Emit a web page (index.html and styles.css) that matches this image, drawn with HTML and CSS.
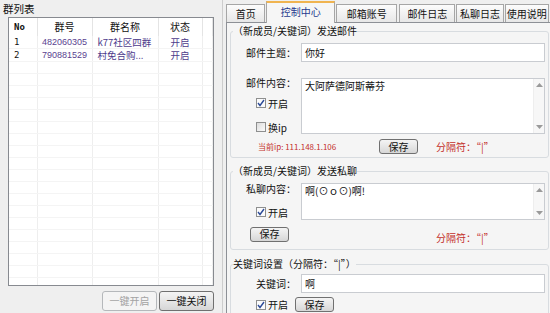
FILE: index.html
```html
<!DOCTYPE html>
<html lang="zh-CN">
<head>
    <meta charset="UTF-8">
    <title>群助手</title>
    <link rel="stylesheet" href="styles.css">
</head>
<body>
    <div class="app">
        <div class="side">
            <div class="side-title">群列表</div>
            <div class="list">
                <table>
                    <colgroup>
                        <col style="width:28px"><col style="width:55px"><col style="width:66px"><col style="width:44px"><col>
                    </colgroup>
                    <tr class="head"><th class="c-no">No</th><th>群号</th><th>群名称</th><th>状态</th><th></th></tr>
                    <tr><td class="c-no">1</td><td class="c-id">482060305</td><td class="c-name">k77社区四群</td><td class="c-st">开启</td><td></td></tr>
                    <tr><td class="c-no">2</td><td class="c-id">790881529</td><td class="c-name">村免合购...</td><td class="c-st">开启</td><td></td></tr>
                    <tr><td></td><td></td><td></td><td></td><td></td></tr>
                    <tr><td></td><td></td><td></td><td></td><td></td></tr>
                    <tr><td></td><td></td><td></td><td></td><td></td></tr>
                    <tr><td></td><td></td><td></td><td></td><td></td></tr>
                    <tr><td></td><td></td><td></td><td></td><td></td></tr>
                    <tr><td></td><td></td><td></td><td></td><td></td></tr>
                    <tr><td></td><td></td><td></td><td></td><td></td></tr>
                    <tr><td></td><td></td><td></td><td></td><td></td></tr>
                    <tr><td></td><td></td><td></td><td></td><td></td></tr>
                    <tr><td></td><td></td><td></td><td></td><td></td></tr>
                    <tr><td></td><td></td><td></td><td></td><td></td></tr>
                    <tr><td></td><td></td><td></td><td></td><td></td></tr>
                    <tr><td></td><td></td><td></td><td></td><td></td></tr>
                    <tr><td></td><td></td><td></td><td></td><td></td></tr>
                    <tr><td></td><td></td><td></td><td></td><td></td></tr>
                    <tr><td></td><td></td><td></td><td></td><td></td></tr>
                    <tr><td></td><td></td><td></td><td></td><td></td></tr>
                    <tr><td></td><td></td><td></td><td></td><td></td></tr>
                    <tr><td></td><td></td><td></td><td></td><td></td></tr>
                </table>
            </div>
            <div class="side-btns">
                <button class="btn btn-big" disabled>一键开启</button>
                <button class="btn btn-big">一键关闭</button>
            </div>
        </div>

        <div class="main">
            <div class="tabs">
                <div class="tab t1">首页</div>
                <div class="tab t2 active">控制中心</div>
                <div class="tab t3">邮箱账号</div>
                <div class="tab t4">邮件日志</div>
                <div class="tab t5">私聊日志</div>
                <div class="tab t6">使用说明</div>
            </div>
            <div class="panel">
                <fieldset class="group g-mail">
                    <legend>（新成员/关键词）发送邮件</legend>
                    <div class="row r-subject">
                        <div class="lbl">邮件主题：</div>
                        <div class="input">你好</div>
                    </div>
                    <div class="row r-content">
                        <div class="stack">
                            <div class="lbl">邮件内容：</div>
                            <label class="check c1"><span class="chk on"></span>开启</label>
                            <label class="check c2"><span class="chk"></span>换ip</label>
                        </div>
                        <div class="area a-mail">
                            <div class="area-text">大阿萨德阿斯蒂芬</div>
                            <div class="vscroll">
                                <svg width="7" height="4" viewBox="0 0 7 4"><path d="M0 4 L3.5 0 L7 4 Z" fill="#9a9a9a"/></svg>
                                <svg width="7" height="4" viewBox="0 0 7 4"><path d="M0 0 L3.5 4 L7 0 Z" fill="#9a9a9a"/></svg>
                            </div>
                        </div>
                    </div>
                    <div class="foot f-mail">
                        <span class="ip">当前ip: 111.148.1.106</span>
                        <button class="btn">保存</button>
                        <span class="sep">分隔符：“|”</span>
                    </div>
                </fieldset>

                <fieldset class="group g-chat">
                    <legend>（新成员/关键词）发送私聊</legend>
                    <div class="row r-chat">
                        <div class="stack">
                            <div class="lbl">私聊内容：</div>
                            <label class="check c3"><span class="chk on"></span>开启</label>
                        </div>
                        <div class="area a-chat">
                            <div class="area-text">啊(⊙ｏ⊙)啊!</div>
                            <div class="vscroll">
                                <svg width="7" height="4" viewBox="0 0 7 4"><path d="M0 4 L3.5 0 L7 4 Z" fill="#9a9a9a"/></svg>
                                <svg width="7" height="4" viewBox="0 0 7 4"><path d="M0 0 L3.5 4 L7 0 Z" fill="#9a9a9a"/></svg>
                            </div>
                        </div>
                    </div>
                    <div class="foot f-chat">
                        <button class="btn">保存</button>
                        <span class="sep">分隔符：“|”</span>
                    </div>
                </fieldset>

                <fieldset class="group g-key">
                    <legend>关键词设置（分隔符：“|”）</legend>
                    <div class="row r-key">
                        <div class="lbl">关键词：</div>
                        <div class="input">啊</div>
                    </div>
                    <div class="foot f-key">
                        <label class="check"><span class="chk on"></span>开启</label>
                        <button class="btn">保存</button>
                    </div>
                </fieldset>
            </div>
        </div>
    </div>
</body>
</html>
```

FILE: styles.css
```css
* {
    box-sizing: border-box;
}

body {
    margin: 0;
    width: 550px;
    height: 313px;
    overflow: hidden;
    background-color: #efefef;
    font-family: "Noto Sans CJK SC", "Liberation Sans", sans-serif;
    font-size: 10px;
    color: #111;
}

.app {
    display: flex;
    height: 313px;
}

/* left: group list */

.side {
    width: 223px;
    padding: 2px 0 0 3px;
    border-right: 1px solid #cdcdcd;
    display: flex;
    flex-direction: column;
}

.side-title {
    height: 14px;
    line-height: 13px;
    font-size: 10.5px;
}

.list {
    margin: 1px 0 0 5px;
    width: 206px;
    height: 269px;
    border: 1px solid #878a90;
    background-color: #fff;
    overflow: hidden;
}

.list table {
    width: 100%;
    border-collapse: collapse;
    table-layout: fixed;
}

.list th,
.list td {
    height: 12px;
    padding: 0;
    line-height: 12px;
    font-size: 9.5px;
    border-right: 1px solid #eeeeee;
    border-bottom: 1px solid #f4f4f4;
    white-space: nowrap;
}

.list th {
    height: 18px;
    font-weight: normal;
    font-size: 10px;
    text-align: center;
    border-right-color: #e4e4e4;
    border-bottom: none;
}

.list .c-no {
    text-align: left;
    padding-left: 5px;
    font-family: "DejaVu Sans Mono", monospace;
    font-size: 9px;
}

.list .head .c-no {
    font-weight: bold;
}

.list .c-id {
    text-align: center;
    color: #5a3f90;
    font-family: "Liberation Sans", sans-serif;
    font-size: 9px;
}

.list .c-name {
    padding-left: 5px;
    color: #4d3b8c;
}

.list .c-st {
    text-align: center;
    color: #4d3b8c;
}

.side-btns {
    margin: 5px 0 0 5px;
    width: 206px;
    display: flex;
    justify-content: flex-end;
    gap: 2px;
}

.btn {
    height: 15px;
    padding: 0;
    border: 1px solid #707070;
    border-radius: 3px;
    background: linear-gradient(#f4f4f4, #e6e6e6 50%, #d6d6d6);
    font-family: inherit;
    font-size: 10px;
    line-height: 12px;
    color: #111;
}

.btn-big {
    width: 55px;
    height: 20px;
}

.btn:disabled {
    color: #a3a3a3;
    border-color: #b5b8bb;
    background: #f4f4f4;
}

/* right: tabs */

.main {
    width: 324px;
    margin-left: 3px;
    display: flex;
    flex-direction: column;
}

.tabs {
    height: 22px;
    display: flex;
    align-items: flex-end;
}

.tab {
    height: 18px;
    margin-right: 1px;
    border: 1px solid #a6a6a6;
    border-bottom: none;
    background: linear-gradient(#fcfcfc, #e7e7e7);
    text-align: center;
    line-height: 17px;
    white-space: nowrap;
}

.t1 { width: 40px; }
.t2 { width: 70px; }
.t3 { width: 62px; margin-right: 2px; }
.t4 { width: 57px; }
.t5 { width: 48px; }
.t6 { width: 45px; }

.tab.active {
    height: 22px;
    margin-bottom: -1px;
    border-top: 2px solid #f0b450;
    background: #f6f6f6;
    color: #1f3b8e;
    line-height: 18px;
    position: relative;
    z-index: 1;
}

.panel {
    height: 291px;
    padding: 2px 0 0 3px;
    border-top: 1px solid #8d9096;
    border-left: 1px solid #8d9096;
    background-color: #f5f5f5;
}

.group {
    margin: 0 1px 0 0;
    padding: 0 3px 3px 2px;
    border: 1px solid #d8dce0;
    border-radius: 3px;
}

.group legend {
    padding: 0;
    height: 12px;
    line-height: 12px;
    font-size: 10px;
}

.g-chat {
    margin-top: 7px;
    padding-bottom: 4px;
}

.g-key {
    margin-top: 8px;
}

.row {
    display: flex;
}

.lbl {
    width: 68px;
    padding-right: 5px;
    text-align: right;
    line-height: 12px;
    white-space: nowrap;
}

.r-subject {
    margin-top: 6px;
    align-items: center;
}

.r-key {
    margin-top: 4px;
    align-items: center;
}

.input {
    flex: 1;
    height: 19px;
    padding-left: 3px;
    border: 1px solid #c9ccd1;
    background-color: #fff;
    line-height: 17px;
}

.r-content {
    margin-top: 16px;
}

.r-chat {
    margin-top: 6px;
}

.stack {
    width: 68px;
    display: flex;
    flex-direction: column;
}

.stack .lbl {
    margin-top: -1px;
}

.r-chat .stack .lbl {
    margin-top: 0;
}

.check {
    display: flex;
    align-items: center;
    gap: 2px;
    height: 12px;
    padding-left: 23px;
    white-space: nowrap;
}

.c1 { margin-top: 8px; }
.c2 { margin-top: 12px; font-family: "Noto Sans CJK SC", "DejaVu Sans Mono", monospace; }
.c3 { margin-top: 11px; }

.chk {
    width: 10px;
    height: 10px;
    border: 1px solid #8e8f8f;
    background: linear-gradient(135deg, #dcdcdc, #fbfbfb);
}

.chk.on {
    background: #fbfbfb url("data:image/svg+xml;utf8,<svg xmlns='http://www.w3.org/2000/svg' width='8' height='8' viewBox='0 0 8 8'><path d='M1 4 L3 6.5 L7 1' fill='none' stroke='%232b4a98' stroke-width='1.4'/></svg>") center no-repeat;
}

.area {
    flex: 1;
    display: flex;
    border: 1px solid #c9ccd1;
    background-color: #fff;
}

.a-mail { height: 56px; }
.a-chat { height: 37px; }

.area-text {
    flex: 1;
    padding: 1px 3px;
    line-height: 12px;
}

.vscroll {
    width: 11px;
    padding: 4px 0;
    display: flex;
    flex-direction: column;
    justify-content: space-between;
    align-items: center;
    background-color: #f7f7f7;
    border-left: 1px solid #eeeeee;
}

.foot {
    display: flex;
    align-items: center;
}

.f-mail {
    margin-top: 5px;
}

.ip {
    width: 146px;
    padding-left: 25px;
    color: #c4302b;
    font-size: 8px;
    font-family: "Noto Sans CJK SC", "DejaVu Sans Mono", monospace;
    white-space: nowrap;
}

.foot .btn {
    width: 39px;
}

.sep {
    margin-left: 18px;
    color: #c4302b;
    white-space: nowrap;
}

.f-chat {
    margin-top: 3px;
    padding-left: 17px;
}

.f-chat .sep {
    margin-left: 147px;
    padding-top: 7px;
}

.f-key {
    margin-top: 4px;
}

.f-key .check {
    padding-left: 23px;
    margin-right: 7px;
}
```
